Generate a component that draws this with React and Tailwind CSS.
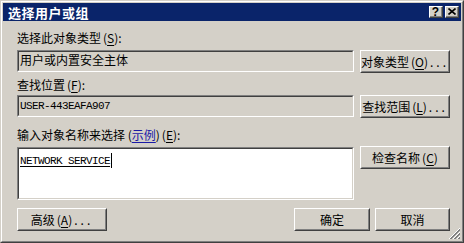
import React from 'react';

// classic 3d borders
const Sunken = ({ className = '', inner = '', children }) => (
  <div className={`border border-t-[#808080] border-l-[#808080] border-r-white border-b-white ${className}`}>
    <div className={`h-full border border-t-[#404040] border-l-[#404040] border-r-[#D4D0C8] border-b-[#D4D0C8] ${inner}`}>
      {children}
    </div>
  </div>
);

const Button = ({ className = '', children }) => (
  <div className={`border border-t-white border-l-white border-r-[#404040] border-b-[#404040] ${className}`}>
    <div className="h-full flex items-center justify-center border border-t-[#D4D0C8] border-l-[#D4D0C8] border-r-[#808080] border-b-[#808080] text-[12px] leading-none text-black whitespace-nowrap">
      {children}
    </div>
  </div>
);

const Key = ({ k }) => (
  <span className="ml-[2px]">(<span className="underline underline-offset-2">{k}</span>)</span>
);

const Dots = () => <span className="ml-[2px] tracking-[3px]">...</span>;

const CaptionBtn = ({ children }) => (
  <div className="w-[14px] h-[12px] border border-t-white border-l-white border-r-[#404040] border-b-[#404040] bg-[#D4D0C8]">
    <div className="h-full flex items-center justify-center border-r border-b border-r-[#808080] border-b-[#808080]">
      {children}
    </div>
  </div>
);

export default function App() {
  return (
    <div className="w-[464px] h-[243px] bg-[#D4D0C8] font-['Noto_Sans_CJK_SC',sans-serif] text-black">
      <div className="h-full border border-t-[#D4D0C8] border-l-[#D4D0C8] border-r-[#404040] border-b-[#404040]">
        <div className="relative h-full flex flex-col border border-t-white border-l-white border-r-[#808080] border-b-[#808080] p-px">
          {/* title bar */}
          <div className="h-[18px] bg-[#0A246A] flex items-center justify-between pl-[5px] pr-[2px]">
            <span className="text-white text-[13px] font-bold leading-none tracking-[0.5px]">选择用户或组</span>
            <div className="flex gap-[2px]">
              <CaptionBtn>
                <span className="text-[12px] font-bold leading-none text-black font-['Liberation_Sans',sans-serif]">?</span>
              </CaptionBtn>
              <CaptionBtn>
                <svg width="8" height="7" viewBox="0 0 8 7">
                  <path d="M0.5 0.5 L7.5 6.5 M7.5 0.5 L0.5 6.5" stroke="#000" strokeWidth="1.6" />
                </svg>
              </CaptionBtn>
            </div>
          </div>

          {/* body */}
          <div className="flex flex-col pl-[14px] text-[12px]">
            <div className="mt-[9px] h-[16px] leading-[16px]">选择此对象类型<Key k="S" />:</div>
            <div className="mt-[4px] flex items-start gap-[6px]">
              <Sunken className="w-[337px] h-[22px]" inner="pl-[1px] leading-[16px]">用户或内置安全主体</Sunken>
              <Button className="w-[90px] h-[23px]">对象类型<Key k="O" /><Dots /></Button>
            </div>

            <div className="mt-[4px] h-[16px] leading-[16px]">查找位置<Key k="F" />:</div>
            <div className="mt-[2px] flex items-start gap-[6px]">
              <Sunken className="w-[337px] h-[22px]" inner="pl-[1px] pt-[2px] leading-[14px] font-['Liberation_Mono',monospace] text-[11px] tracking-[-0.6px]">USER-443EAFA907</Sunken>
              <Button className="w-[90px] h-[23px]">查找范围<Key k="L" /><Dots /></Button>
            </div>

            <div className="mt-[9px] h-[16px] leading-[16px]">
              输入对象名称来选择 (<span className="text-[#1A1AA6] underline underline-offset-2">示例</span>)<Key k="E" />:
            </div>
            <div className="mt-[3px] flex items-start gap-[6px]">
              <Sunken className="mt-px w-[337px] h-[53px]" inner="bg-white pl-[1px] pt-[4px]">
                <div className="flex items-center">
                  <span className="font-['Liberation_Mono',monospace] text-[11px] tracking-[-0.6px] leading-[14px] underline underline-offset-2">NETWORK SERVICE</span>
                  <span className="ml-[1px] w-px h-[15px] bg-black" />
                </div>
              </Sunken>
              <Button className="w-[90px] h-[23px]">检查名称<Key k="C" /></Button>
            </div>

            <div className="mt-[8px] flex items-start">
              <Button className="w-[90px] h-[23px]">高级<Key k="A" /><Dots /></Button>
              <div className="ml-[187px] flex gap-[5px]">
                <Button className="w-[76px] h-[23px]">确定</Button>
                <Button className="w-[75px] h-[23px]">取消</Button>
              </div>
            </div>
          </div>

          {/* size grip */}
          <svg className="absolute right-[1px] bottom-[1px]" width="12" height="12" viewBox="0 0 12 12">
            <path d="M11 1 L1 11 M11 5 L5 11 M11 9 L9 11" stroke="#808080" strokeWidth="1" />
            <path d="M11 2 L2 11 M11 6 L6 11 M11 10 L10 11" stroke="#808080" strokeWidth="1" />
            <path d="M11 0 L0 11 M11 4 L4 11 M11 8 L8 11" stroke="#FFFFFF" strokeWidth="1" />
          </svg>
        </div>
      </div>
    </div>
  );
}
